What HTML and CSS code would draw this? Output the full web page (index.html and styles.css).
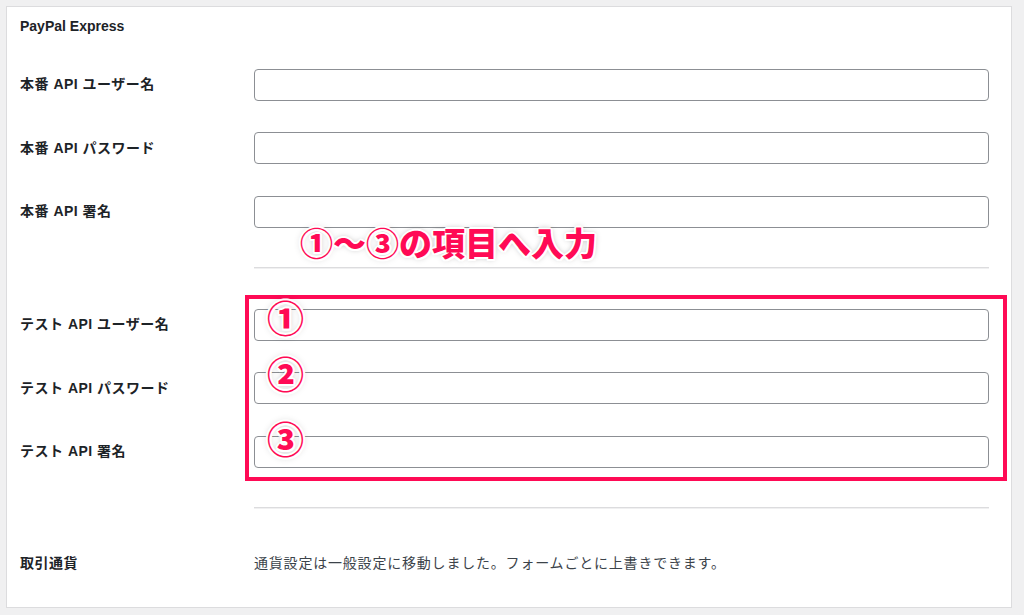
FILE: index.html
```html
<!DOCTYPE html>
<html lang="ja">
<head>
    <meta charset="UTF-8">
    <meta name="viewport" content="width=device-width, initial-scale=1.0">
    <title>PayPal Express</title>
    <link rel="stylesheet" href="styles.css">
</head>
<body>
    <div class="panel">
        <h3 class="title">PayPal Express</h3>

        <!-- live credentials -->
        <div class="row">
            <label class="label" for="liveUser">本番 API ユーザー名</label>
            <input type="text" class="text" id="liveUser">
        </div>
        <div class="row">
            <label class="label" for="livePass">本番 API パスワード</label>
            <input type="text" class="text" id="livePass">
        </div>
        <div class="row">
            <label class="label" for="liveSig">本番 API 署名</label>
            <input type="text" class="text" id="liveSig">
        </div>

        <div class="sep"><hr></div>

        <!-- sandbox credentials -->
        <div class="row">
            <label class="label" for="testUser">テスト API ユーザー名</label>
            <input type="text" class="text" id="testUser">
        </div>
        <div class="row">
            <label class="label" for="testPass">テスト API パスワード</label>
            <input type="text" class="text" id="testPass">
        </div>
        <div class="row">
            <label class="label" for="testSig">テスト API 署名</label>
            <input type="text" class="text" id="testSig">
        </div>

        <div class="sep"><hr></div>

        <div class="row currency">
            <div class="label">取引通貨</div>
            <p class="note">通貨設定は一般設定に移動しました。フォームごとに上書きできます。</p>
        </div>

        <!-- annotations drawn over the form -->
        <div class="callout">①～③の項目へ入力</div>
        <div class="highlight"></div>
        <span class="num num-1">①</span>
        <span class="num num-2">②</span>
        <span class="num num-3">③</span>
    </div>
</body>
</html>
```

FILE: styles.css
```css
body {
    margin: 0;
    padding: 6px 12px 0 6px;
    background-color: #f0f0f1;
    font-family: "Liberation Sans", "Noto Sans CJK JP", sans-serif;
    color: #1d2327;
}
.panel {
    position: relative;
    height: 602px;
    box-sizing: border-box;
    background-color: #fff;
    border: 1px solid #dcdcde;
    padding: 9px 22px 0 13px;
}
.title {
    margin: 0 0 17px;
    font-size: 14px;
    line-height: 20px;
    font-weight: 700;
}
.row {
    display: grid;
    grid-template-columns: 234px 1fr;
    align-items: center;
    height: 63.5px;
}
.label {
    font-size: 14px;
    font-weight: 700;
    letter-spacing: 0.5px;
    margin-bottom: 3px;
}
.text {
    height: 32px;
    box-sizing: border-box;
    border: 1px solid #8c8f94;
    border-radius: 4px;
    background: #fff;
    margin: 0;
}
.sep {
    height: 49.5px;
    padding-top: 23px;
    box-sizing: border-box;
    margin-left: 234px;
}
.sep hr {
    margin: 0;
    border: 0;
    border-top: 1px solid #dcdcde;
    border-bottom: 1px solid #f0f0f1;
}
.currency {
    height: 58px;
}
.currency .label {
    margin-bottom: 0;
}
.note {
    margin: 0;
    font-size: 14px;
    letter-spacing: 0.8px;
    color: #3c434a;
}
.highlight {
    position: absolute;
    left: 238px;
    top: 288px;
    width: 762px;
    height: 186px;
    box-sizing: border-box;
    border: 4px solid #ff0a55;
}
.callout,
.num {
    position: absolute;
    font-family: "Noto Sans CJK JP", sans-serif;
    font-weight: 900;
    color: #ff0a55;
    line-height: 1;
    text-shadow:
        2px 0 0 #fff, -2px 0 0 #fff, 0 2px 0 #fff, 0 -2px 0 #fff,
        1.5px 1.5px 0 #fff, -1.5px 1.5px 0 #fff, 1.5px -1.5px 0 #fff, -1.5px -1.5px 0 #fff,
        0 0 6px rgba(0, 0, 0, 0.35);
}
.callout {
    left: 293px;
    top: 219px;
    font-size: 33px;
    white-space: nowrap;
}
.num {
    left: 260px;
    font-size: 37px;
}
.num-1 { top: 292px; }
.num-2 { top: 348px; }
.num-3 { top: 413px; }
```
